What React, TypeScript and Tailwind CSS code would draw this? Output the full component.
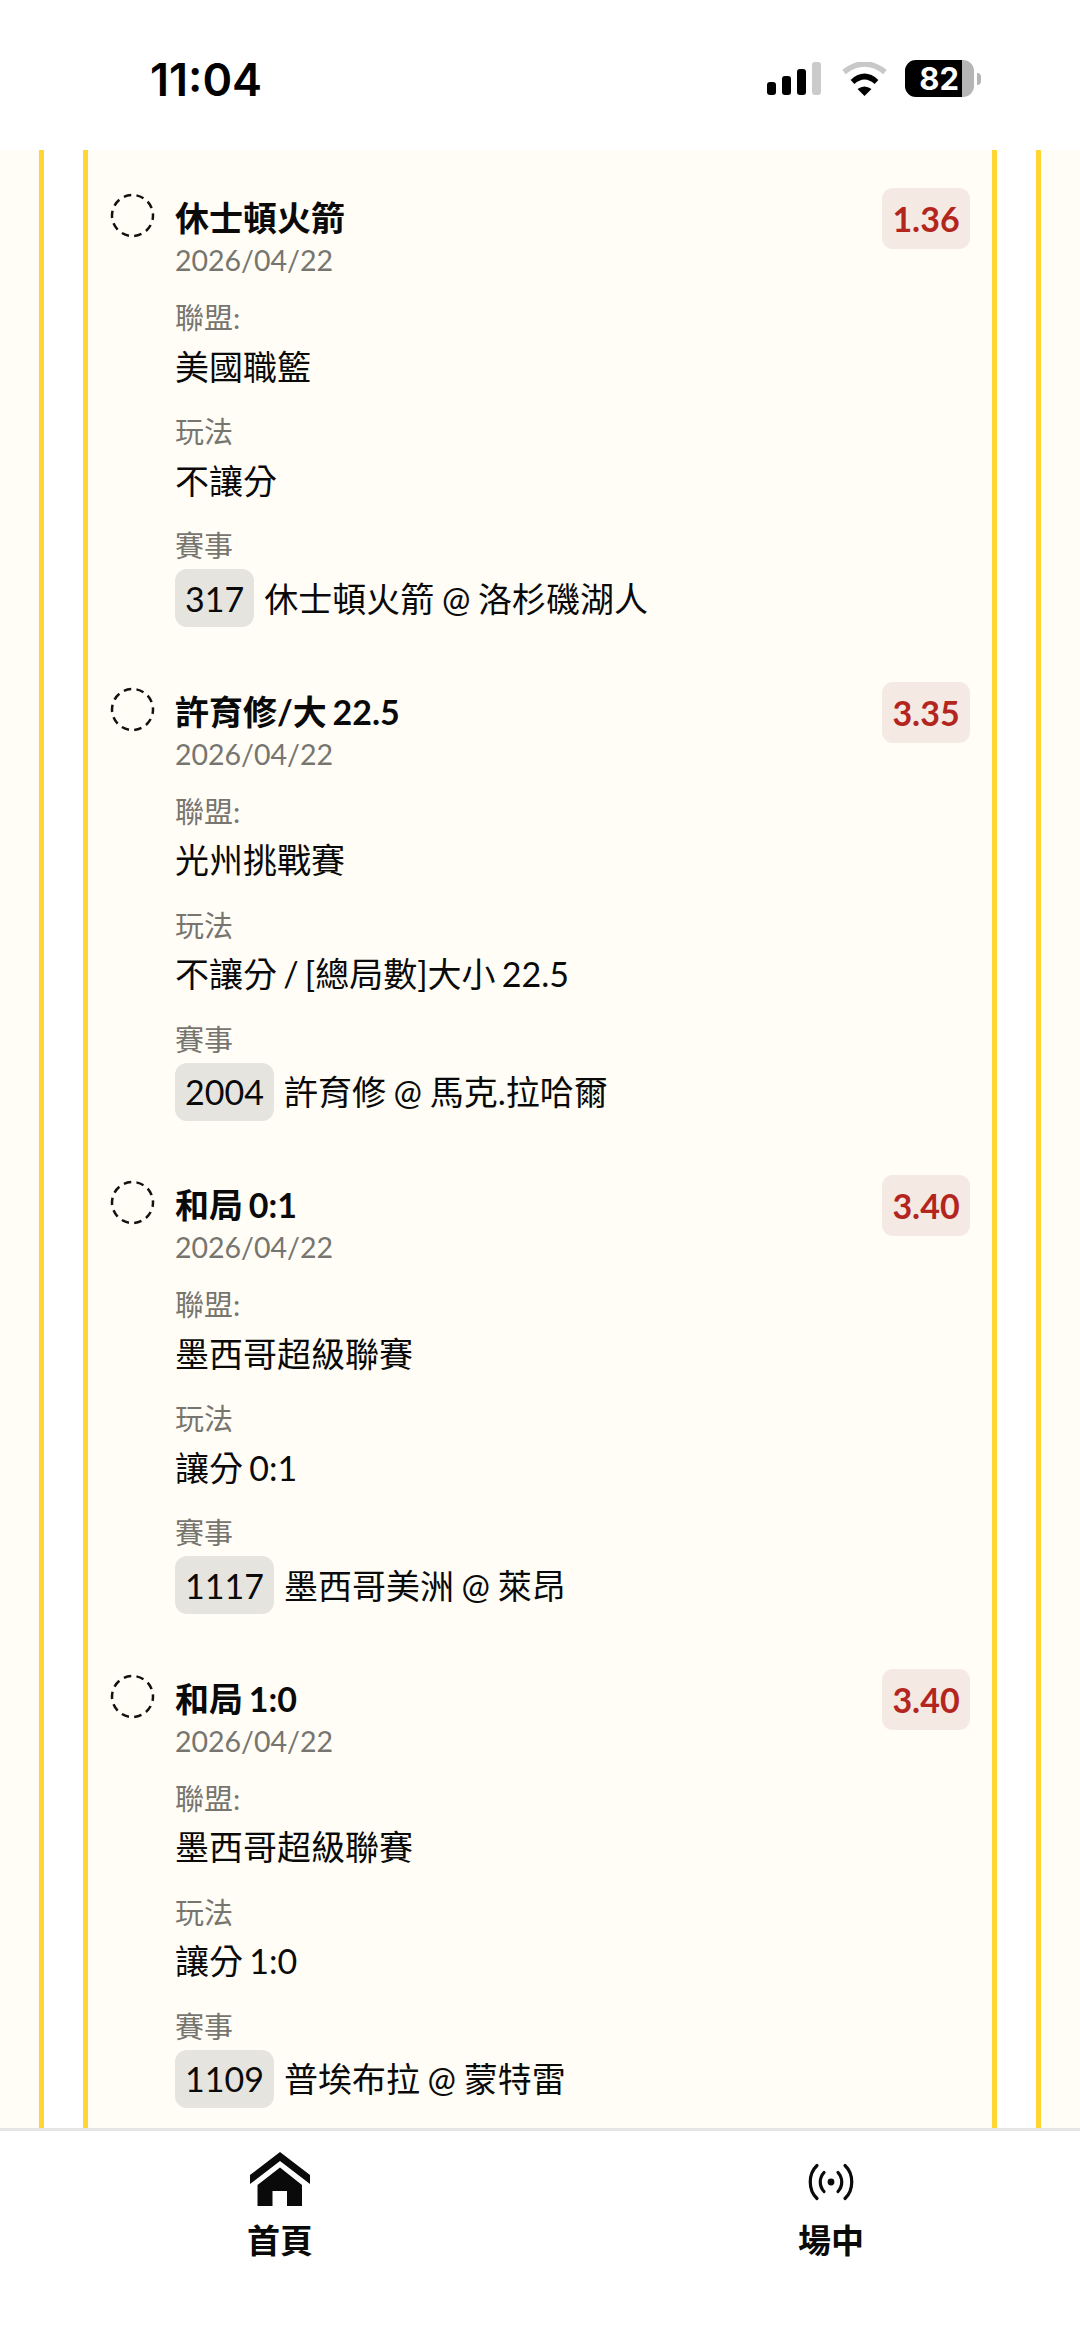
const bets = [
  { title: '休士頓火箭', odds: '1.36', league: '美國職籃', market: '不讓分', code: '317', match: '休士頓火箭 @ 洛杉磯湖人' },
  { title: '許育修/大 22.5', odds: '3.35', league: '光州挑戰賽', market: '不讓分 / [總局數]大小 22.5', code: '2004', match: '許育修 @ 馬克.拉哈爾' },
  { title: '和局 0:1', odds: '3.40', league: '墨西哥超級聯賽', market: '讓分 0:1', code: '1117', match: '墨西哥美洲 @ 萊昂' },
  { title: '和局 1:0', odds: '3.40', league: '墨西哥超級聯賽', market: '讓分 1:0', code: '1109', match: '普埃布拉 @ 蒙特雷' },
];

function SignalIcon() {
  return (
    <svg width="54" height="34" viewBox="0 0 54 34">
      <rect x="0" y="20" width="9" height="13" rx="3" fill="#000" />
      <rect x="15" y="14" width="9" height="19" rx="3" fill="#000" />
      <rect x="30" y="7" width="9" height="26" rx="3" fill="#000" />
      <rect x="45" y="0" width="9" height="33" rx="3" fill="#cbcbcb" />
    </svg>
  );
}

function WifiIcon() {
  return (
    <svg width="47" height="34" viewBox="0 0 47 34">
      <path d="M3 10 Q23.500 -6 44 10" fill="none" stroke="#c8c8c8" strokeWidth="5.500" />
      <path d="M11.500 20 Q23.500 9 35.500 20" fill="none" stroke="#000" strokeWidth="5.500" />
      <path d="M16.500 27 Q23.500 22 30.500 27 L23.500 34 Z" fill="#000" />
    </svg>
  );
}

function PendingCircle() {
  return (
    <svg width="45" height="45" viewBox="0 0 45 45" className="shrink-0 mt-[5px]">
      <circle cx="22.500" cy="22.500" r="20.500" fill="none" stroke="#111" strokeWidth="2.500" strokeDasharray="7.500 5.380" strokeDashoffset="3" />
    </svg>
  );
}

function HomeIcon() {
  return (
    <svg width="60" height="54" viewBox="0 0 60 54">
      <path d="M0 23 L30 0 L60 23 L60 32 L30 9 L0 32 Z" fill="#0a0a0a" />
      <path d="M30 15.500 L52 33 L52 54 L37 54 L37 39 L22.500 39 L22.500 54 L7.500 54 L7.500 33 Z" fill="#0a0a0a" />
    </svg>
  );
}

function LiveIcon() {
  return (
    <svg width="48" height="38" viewBox="0 0 48 38" fill="none" stroke="#0a0a0a" strokeWidth="3.200" strokeLinecap="round">
      <path d="M10 2.500 C1 11 1 27 10 35.500" />
      <path d="M38 2.500 C47 11 47 27 38 35.500" />
      <path d="M17 9.500 C12 15 12 23 17 28.500" />
      <path d="M31 9.500 C36 15 36 23 31 28.500" />
      <circle cx="24" cy="19" r="3.400" fill="#0a0a0a" stroke="none" />
    </svg>
  );
}

function Field({ label, value }: { label: string; value: string }) {
  return (
    <div className="mb-[25.500px]">
      <div className="text-[29px] leading-[36px] text-[#77756f]">{label}</div>
      <div className="text-[34px] leading-[44px] text-[#0a0a0a] mt-[8.500px] [word-spacing:-2.500px]">{value}</div>
    </div>
  );
}

export default function App() {
  return (
    <div className="w-[1080px] h-[2347px] flex flex-col overflow-hidden bg-white font-['Lato','Noto_Sans_CJK_TC',sans-serif]">
      <header className="h-[150px] shrink-0 flex items-start justify-between pl-[150px] pr-[99px] pt-[53px]">
        <span className="text-[45px] leading-[54px] font-semibold text-black font-['Inter',sans-serif]">11:04</span>
        <div className="flex items-center pt-[7px]">
          <SignalIcon />
          <div className="ml-[20px]"><WifiIcon /></div>
          <div className="flex items-center gap-[3px] ml-[17px]">
            <div className="w-[69px] h-[37px] rounded-[11px] overflow-hidden bg-[#b5b5b5] flex">
              <div className="w-[57px] h-full bg-black flex items-center justify-end pr-[3px] text-[31px] font-bold text-white leading-none font-['Inter',sans-serif]">82</div>
            </div>
            <div className="w-[4px] h-[12px] rounded-r-full bg-[#b5b5b5]" />
          </div>
        </div>
      </header>

      <main className="flex-1 min-h-0 overflow-hidden bg-[#fffdf6] px-[39px]">
        <div className="h-full bg-white border-x-[5px] border-[#ffd633] px-[39px]">
          <div className="h-full bg-[#fffdf6] border-x-[5px] border-[#ffd633] px-[22px] pt-[38px]">
            {bets.map((bet) => (
              <div key={bet.code} className="flex gap-[20px] h-[493.500px]">
                <PendingCircle />
                <div className="flex-1 min-w-0">
                  <div className="flex items-start justify-between">
                    <div className="pt-[8px]">
                      <div className="text-[34px] leading-[44px] font-bold text-[#0a0a0a] [word-spacing:-2.500px]">{bet.title}</div>
                      <div className="text-[28.500px] leading-[40px] text-[#77756f] mb-[20px]">2026/04/22</div>
                    </div>
                    <div className="w-[88px] h-[61px] rounded-[11px] bg-[#f5e9e4] flex items-center justify-center text-[34px] font-bold text-[#b3261e]">{bet.odds}</div>
                  </div>
                  <div>
                    <Field label="聯盟:" value={bet.league} />
                    <Field label="玩法" value={bet.market} />
                    <div>
                      <div className="text-[29px] leading-[36px] text-[#77756f]">賽事</div>
                      <div className="flex items-center gap-[10px] mt-[5px]">
                        <span className="h-[58px] px-[10px] rounded-[12px] bg-[#e5e4df] flex items-center text-[34px] text-[#0a0a0a]">{bet.code}</span>
                        <span className="text-[34px] text-[#0a0a0a] [word-spacing:-1px]">{bet.match}</span>
                      </div>
                    </div>
                  </div>
                </div>
              </div>
            ))}
          </div>
        </div>
      </main>

      <nav className="h-[219px] shrink-0 border-t-[3px] border-[#e5e5e5] bg-white flex items-start pl-[240px] gap-[471px] pt-[21px]">
        <div className="w-[80px] flex flex-col items-center">
          <div className="h-[54px] flex items-center"><HomeIcon /></div>
          <span className="text-[33px] leading-[40px] font-bold text-[#0a0a0a] mt-[14px]">首頁</span>
        </div>
        <div className="w-[80px] flex flex-col items-center">
          <div className="h-[54px] flex items-center pt-[5px]"><LiveIcon /></div>
          <span className="text-[33px] leading-[40px] font-bold text-[#0a0a0a] mt-[14px]">場中</span>
        </div>
      </nav>
    </div>
  );
}
